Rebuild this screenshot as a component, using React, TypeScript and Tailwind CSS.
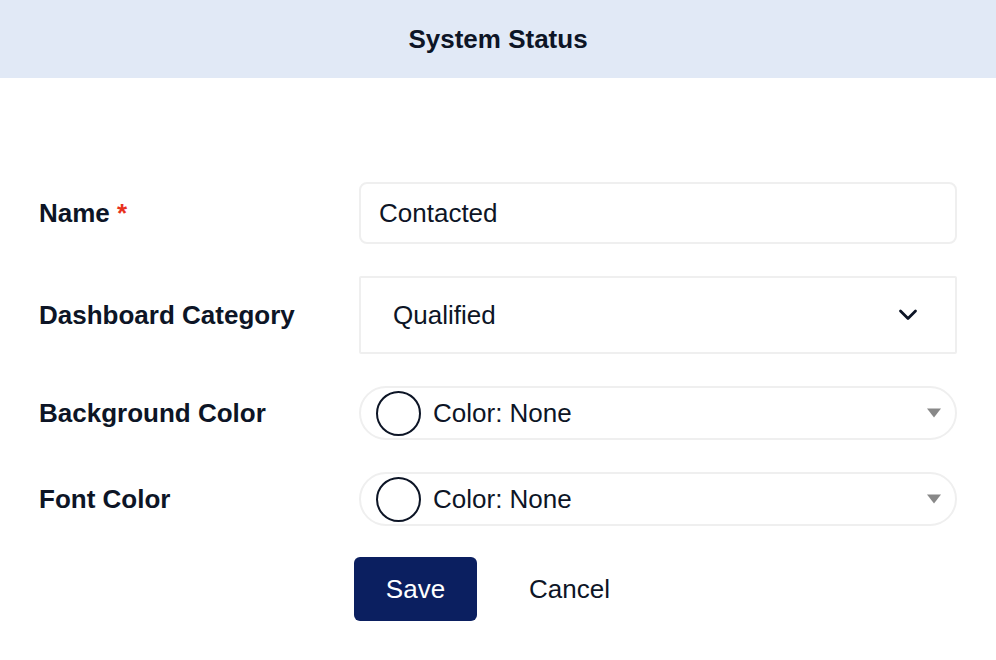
function ColorPicker() {
  return (
    <div className="flex h-[54px] items-center rounded-full border-2 border-[#efefef] pl-[15px] pr-[12px]">
      <span className="h-[45px] w-[45px] shrink-0 rounded-full border-2 border-[#0d1526]" />
      <span className="ml-[12px] flex-1 text-[26px] text-[#0d1526]">Color: None</span>
      <svg width="16" height="10" viewBox="0 0 16 10" className="mr-[1px]">
        <path d="M1 0.5 L15 0.5 L8 9.5 Z" fill="#888888" />
      </svg>
    </div>
  );
}

export default function App() {
  return (
    <div
      className="min-h-[660px] w-[996px] bg-white text-[#0d1526]"
      style={{ fontFamily: '"Liberation Sans", Arial, sans-serif' }}
    >
      <header className="flex h-[78px] items-center justify-center bg-[#e1e9f6]">
        <h1 className="text-[26px] font-bold">System Status</h1>
      </header>

      <div className="grid grid-cols-[320px_1fr] items-center gap-y-[32px] px-[39px] pt-[104px]">
        <label className="text-[26px] font-bold">
          Name <span className="text-[#e8321e]">*</span>
        </label>
        <div className="flex h-[62px] items-center rounded-[8px] border-2 border-[#efefef] px-[18px] text-[26px]">
          Contacted
        </div>

        <label className="text-[26px] font-bold">Dashboard Category</label>
        <div className="flex h-[78px] items-center justify-between rounded-[2px] border-2 border-[#efefef] pl-[32px] pr-[37px] text-[26px]">
          <span>Qualified</span>
          <svg width="20" height="12" viewBox="0 0 20 12" fill="none">
            <path d="M2.5 2 L10 9.5 L17.5 2" stroke="#0d1526" strokeWidth="2.8" strokeLinecap="round" strokeLinejoin="round" />
          </svg>
        </div>

        <label className="text-[26px] font-bold">Background Color</label>
        <ColorPicker />

        <label className="text-[26px] font-bold">Font Color</label>
        <ColorPicker />

        <div />
        <div className="ml-[-5px] mt-[-1px] flex items-center">
          <button className="h-[64px] w-[123px] rounded-[6px] bg-[#0b1f60] text-[26px] text-white">
            Save
          </button>
          <button className="ml-[52px] text-[26px] text-[#0d1526]">Cancel</button>
        </div>
      </div>
    </div>
  );
}
